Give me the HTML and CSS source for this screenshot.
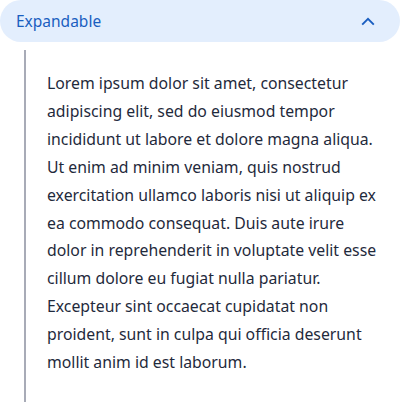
FILE: index.html
```
<!DOCTYPE html>
<html>
<head>
<meta charset="utf-8">
<link rel="stylesheet" href="styles.css">
</head>
<body>
<div class="expander">
  <button class="expander-header" type="button" aria-expanded="true">
    <span class="expander-title">Expandable</span>
    <svg class="chevron" width="14" height="9" viewBox="0 0 14 9" aria-hidden="true"><path d="M1.2 7.6 L7 1.8 L12.8 7.6" fill="none" stroke="#1a5ec0" stroke-width="1.9"/></svg>
  </button>
  <div class="expander-body">
    <p class="expander-text">Lorem ipsum dolor sit amet, consectetur adipiscing elit, sed do eiusmod tempor incididunt ut labore et dolore magna aliqua. Ut enim ad minim veniam, quis nostrud exercitation ullamco laboris nisi ut aliquip ex ea commodo consequat. Duis aute irure dolor in reprehenderit in voluptate velit esse cillum dolore eu fugiat nulla pariatur. Excepteur sint occaecat cupidatat non proident, sunt in culpa qui officia deserunt mollit anim id est laborum.</p>
  </div>
</div>
</body>
</html>
```
FILE: styles.css
```
html, body {
  margin: 0;
  padding: 0;
  background: #ffffff;
  overflow: hidden;
}
body {
  font-family: "Noto Sans", "Open Sans", sans-serif;
}
.expander {
  width: 400px;
}
.expander-header {
  display: flex;
  align-items: center;
  justify-content: space-between;
  width: 100%;
  height: 42px;
  padding: 0 25px 0 16px;
  border: none;
  border-radius: 21px;
  background: #e3eefd;
  font-family: inherit;
  box-sizing: border-box;
  cursor: pointer;
}
.expander-title {
  font-size: 15.5px;
  color: #1a5ec0;
}
.chevron {
  display: block;
  margin-top: 1px;
}
.expander-body {
  margin: 8px 0 0 24px;
  border-left: 2px solid #a8abb7;
  padding: 20px 18px 40px 21px;
}
.expander-text {
  margin: 0;
  font-size: 15.8px;
  line-height: 27.9px;
  color: #1f2a3c;
}
```
